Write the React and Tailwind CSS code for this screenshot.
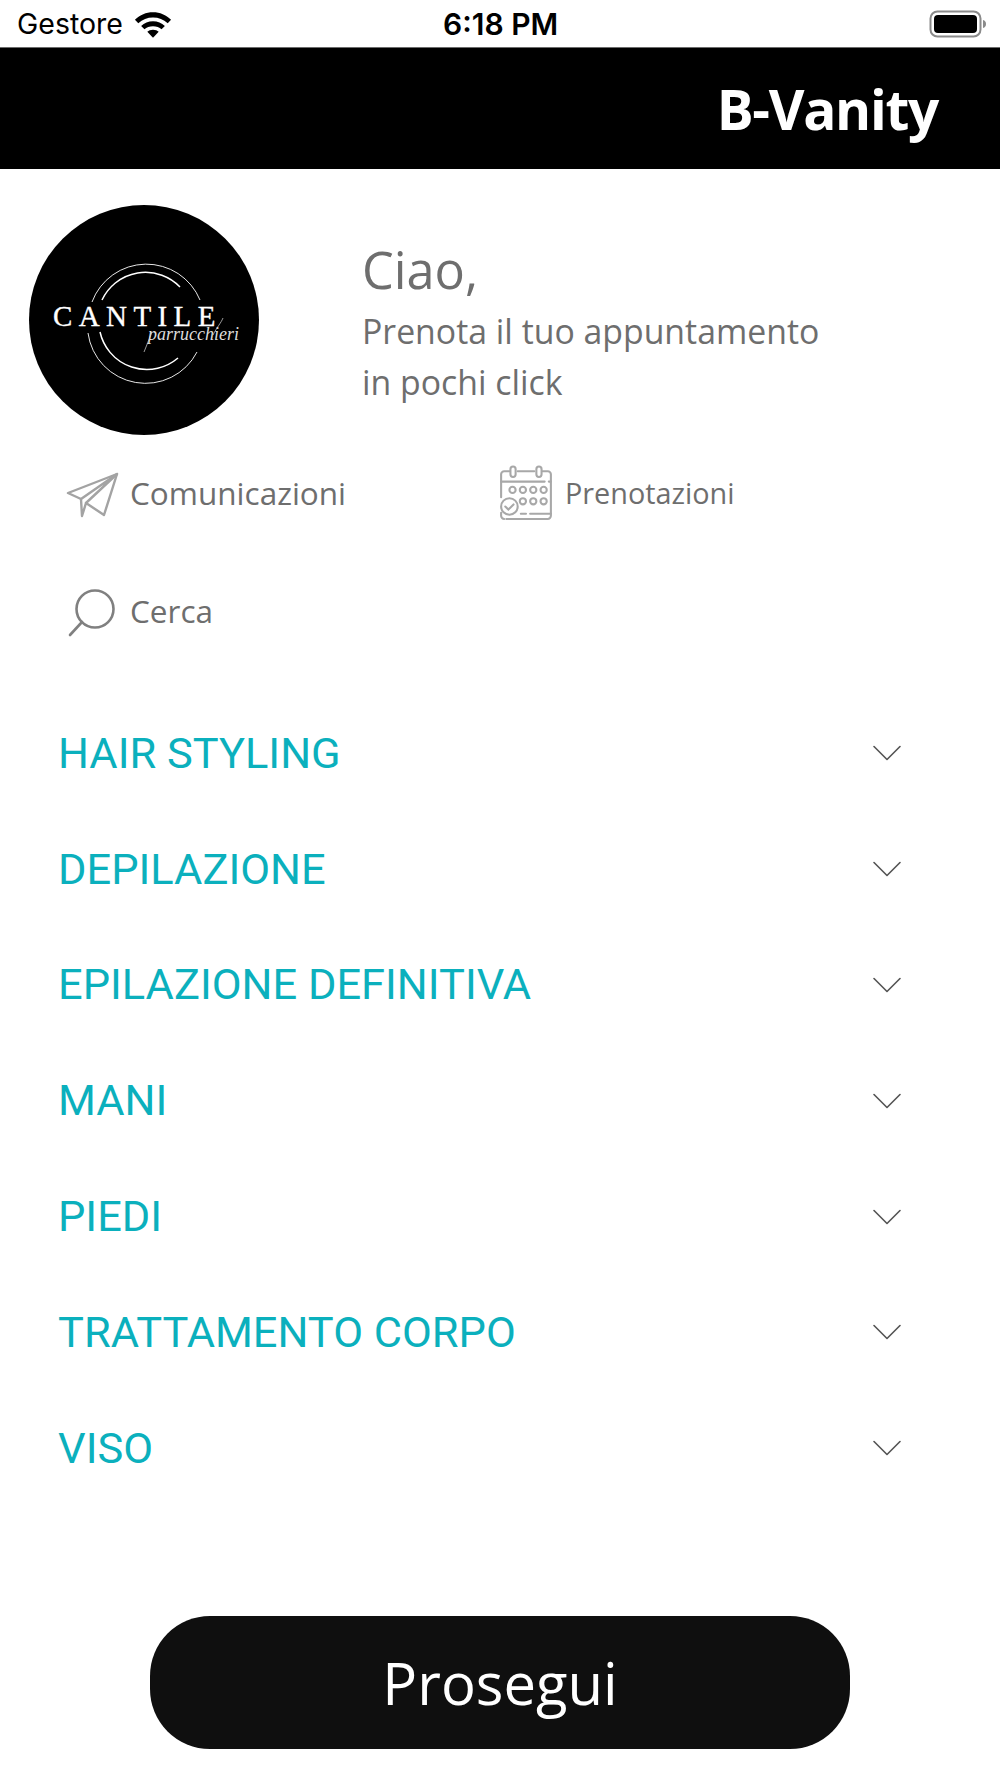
import { ChevronDown } from 'lucide-react';

const categories = [
    'HAIR STYLING',
    'DEPILAZIONE',
    'EPILAZIONE DEFINITIVA',
    'MANI',
    'PIEDI',
    'TRATTAMENTO CORPO',
    'VISO',
];

function Wifi() {
    return (
        <svg width="38" height="27" viewBox="0 0 40 28" fill="#000">
            <path d="M20 1C12.500 1 6.500 3.800 1 9l3.500 3.600C9 8.500 14 6.500 20 6.500s11 2 15.500 6.100L39 9C33.500 3.800 27.500 1 20 1z" />
            <path d="M20 10.500c-5 0-9 1.800-12.500 5l3.500 3.600c2.300-2 5.400-3.300 9-3.300s6.700 1.300 9 3.300l3.500-3.600c-3.500-3.200-7.500-5-12.500-5z" />
            <path d="M20 19.500c-2.500 0-4.600.9-6 2.200l6 6.300 6-6.300c-1.400-1.300-3.500-2.200-6-2.200z" />
        </svg>
    );
}

function Battery() {
    return (
        <svg width="58" height="30" viewBox="0 0 58 30">
            <rect x="1.500" y="2.500" width="50" height="25" rx="7" fill="none" stroke="#8a8a8a" strokeWidth="2" />
            <rect x="5" y="6" width="43" height="18" rx="4" fill="#000" />
            <path d="M54 11c2 .5 3 2 3 4s-1 3.500-3 4z" fill="#8a8a8a" />
        </svg>
    );
}

function Logo() {
    return (
        <svg width="230" height="230" viewBox="0 0 230 230" className="shrink-0">
            <circle cx="115" cy="115" r="115" fill="#000" />
            <g fill="none" stroke="#fff">
                <path d="M63 97A58 58 0 0 1 171 95" strokeWidth="0.9" />
                <path d="M59 128A58 58 0 0 0 168 147" strokeWidth="0.9" />
                <path d="M73 95A48 48 0 0 1 151 82" strokeWidth="1.500" />
                <path d="M71 127A48 48 0 0 0 149 153" strokeWidth="1.500" />
            </g>
            <text x="24" y="121" fill="#fff" stroke="#fff" strokeWidth="0.3" fontFamily="Liberation Serif" fontSize="29" letterSpacing="6.400">CANTILE</text>
            <text x="119" y="135" fill="#ddd" fontFamily="Liberation Serif" fontStyle="italic" fontSize="18">parrucchieri</text>
            <path d="M115 147L123 127M184 130C188 122 192 118 194 113" stroke="#ddd" strokeWidth="0.7" fill="none" />
        </svg>
    );
}

function PlaneIcon() {
    return (
        <svg width="54" height="46" viewBox="0 0 54 46" fill="none" stroke="#a3a3a3" strokeWidth="2.400" strokeLinejoin="round" strokeLinecap="round" className="mt-1">
            <path d="M2 21L51 2 38 43 20 31 16 44 15 27z" />
            <path d="M15 27L51 2 20 31" />
        </svg>
    );
}

function CalendarIcon() {
    return (
        <svg width="56" height="56" viewBox="0 0 54 54" fill="none" stroke="#a8a8a8" strokeWidth="2" strokeLinecap="round" className="-ml-0.5">
            <path d="M11 6H6a3 3 0 0 0-3 3v22M19 6h16M43 6h5a3 3 0 0 1 3 3v40a3 3 0 0 1-3 3H8" />
            <rect x="12" y="1.500" width="5" height="10" rx="2.500" />
            <rect x="37" y="1.500" width="5" height="10" rx="2.500" />
            <path d="M3 16h42M49 16h2" />
            <circle cx="14" cy="24" r="3" />
            <circle cx="24" cy="24" r="3" />
            <circle cx="34" cy="24" r="3" />
            <circle cx="44" cy="24" r="3" />
            <circle cx="24" cy="35" r="3" />
            <circle cx="34" cy="35" r="3" />
            <circle cx="44" cy="35" r="3" />
            <circle cx="11" cy="40" r="8" />
            <path d="M7 40l3 3 5-5" />
            <path d="M3 46v3a3 3 0 0 0 3 3M22 47h5M31 47h20" />
        </svg>
    );
}

function SearchIcon() {
    return (
        <svg width="50" height="48" viewBox="0 0 50 48" fill="none" stroke="#808080" strokeWidth="2.600" strokeLinecap="round" className="ml-0.5 mt-1">
            <circle cx="27" cy="20" r="18.500" />
            <path d="M14 33L2 46" />
        </svg>
    );
}

export default function App() {
    return (
        <div className="w-[1000px] h-[1778px] bg-white flex flex-col font-['Open_Sans',sans-serif]">
            <div className="h-12 flex items-center justify-between pl-[17px] pr-[13px] relative border-b border-[#6b6b6b]">
                <div className="flex items-center gap-[11px] pt-0.5">
                    <span className="font-['Inter',sans-serif] text-[28.500px] text-black">Gestore</span>
                    <Wifi />
                </div>
                <span className="absolute left-[443px] top-[2px] font-['Inter',sans-serif] font-semibold text-[30px] text-black">6:18 PM</span>
                <Battery />
            </div>

            <div className="h-[121px] bg-black flex items-center justify-end pr-[62px]">
                <span className="text-white font-bold text-[55px] tracking-[-1.3px] leading-none pb-px">B-Vanity</span>
            </div>

            <div className="flex pl-[29px] pt-9">
                <Logo />
                <div className="ml-[103px] pt-[29px] text-[#6e6e6e]">
                    <div className="text-[50.500px] leading-[72px]">Ciao,</div>
                    <div className="text-[33.800px] leading-[51px]">Prenota il tuo appuntamento</div>
                    <div className="text-[33.800px] leading-[51px]">in pochi click</div>
                </div>
            </div>

            <div className="grid grid-cols-[434px_1fr] pl-[66px] pt-[31px] text-[#6e6e6e] text-[31.500px]">
                <div className="h-[54px] flex items-center gap-[10px]">
                    <PlaneIcon />
                    <span>Comunicazioni</span>
                </div>
                <div className="h-[54px] flex items-center gap-[11px]">
                    <CalendarIcon />
                    <span className="text-[28.800px]">Prenotazioni</span>
                </div>
                <div className="h-[54px] mt-[64px] flex items-center gap-[12px] col-span-2">
                    <SearchIcon />
                    <span>Cerca</span>
                </div>
            </div>

            <div className="mt-[57.500px] flex flex-col">
                {categories.map((c) => (
                    <div key={c} className="h-[115.800px] flex items-center justify-between pl-[58px] pr-[87px]">
                        <span className="font-['Roboto',sans-serif] text-[43.400px] text-[#0bb0bd]">{c}</span>
                        <ChevronDown size={52} strokeWidth={0.75} className="text-[#555]" />
                    </div>
                ))}
            </div>

            <div className="mt-auto pb-[29px] flex justify-center">
                <button className="w-[700px] h-[133px] rounded-[60px] bg-[#0f0f0f] text-white text-[58px]">Prosegui</button>
            </div>
        </div>
    );
}
